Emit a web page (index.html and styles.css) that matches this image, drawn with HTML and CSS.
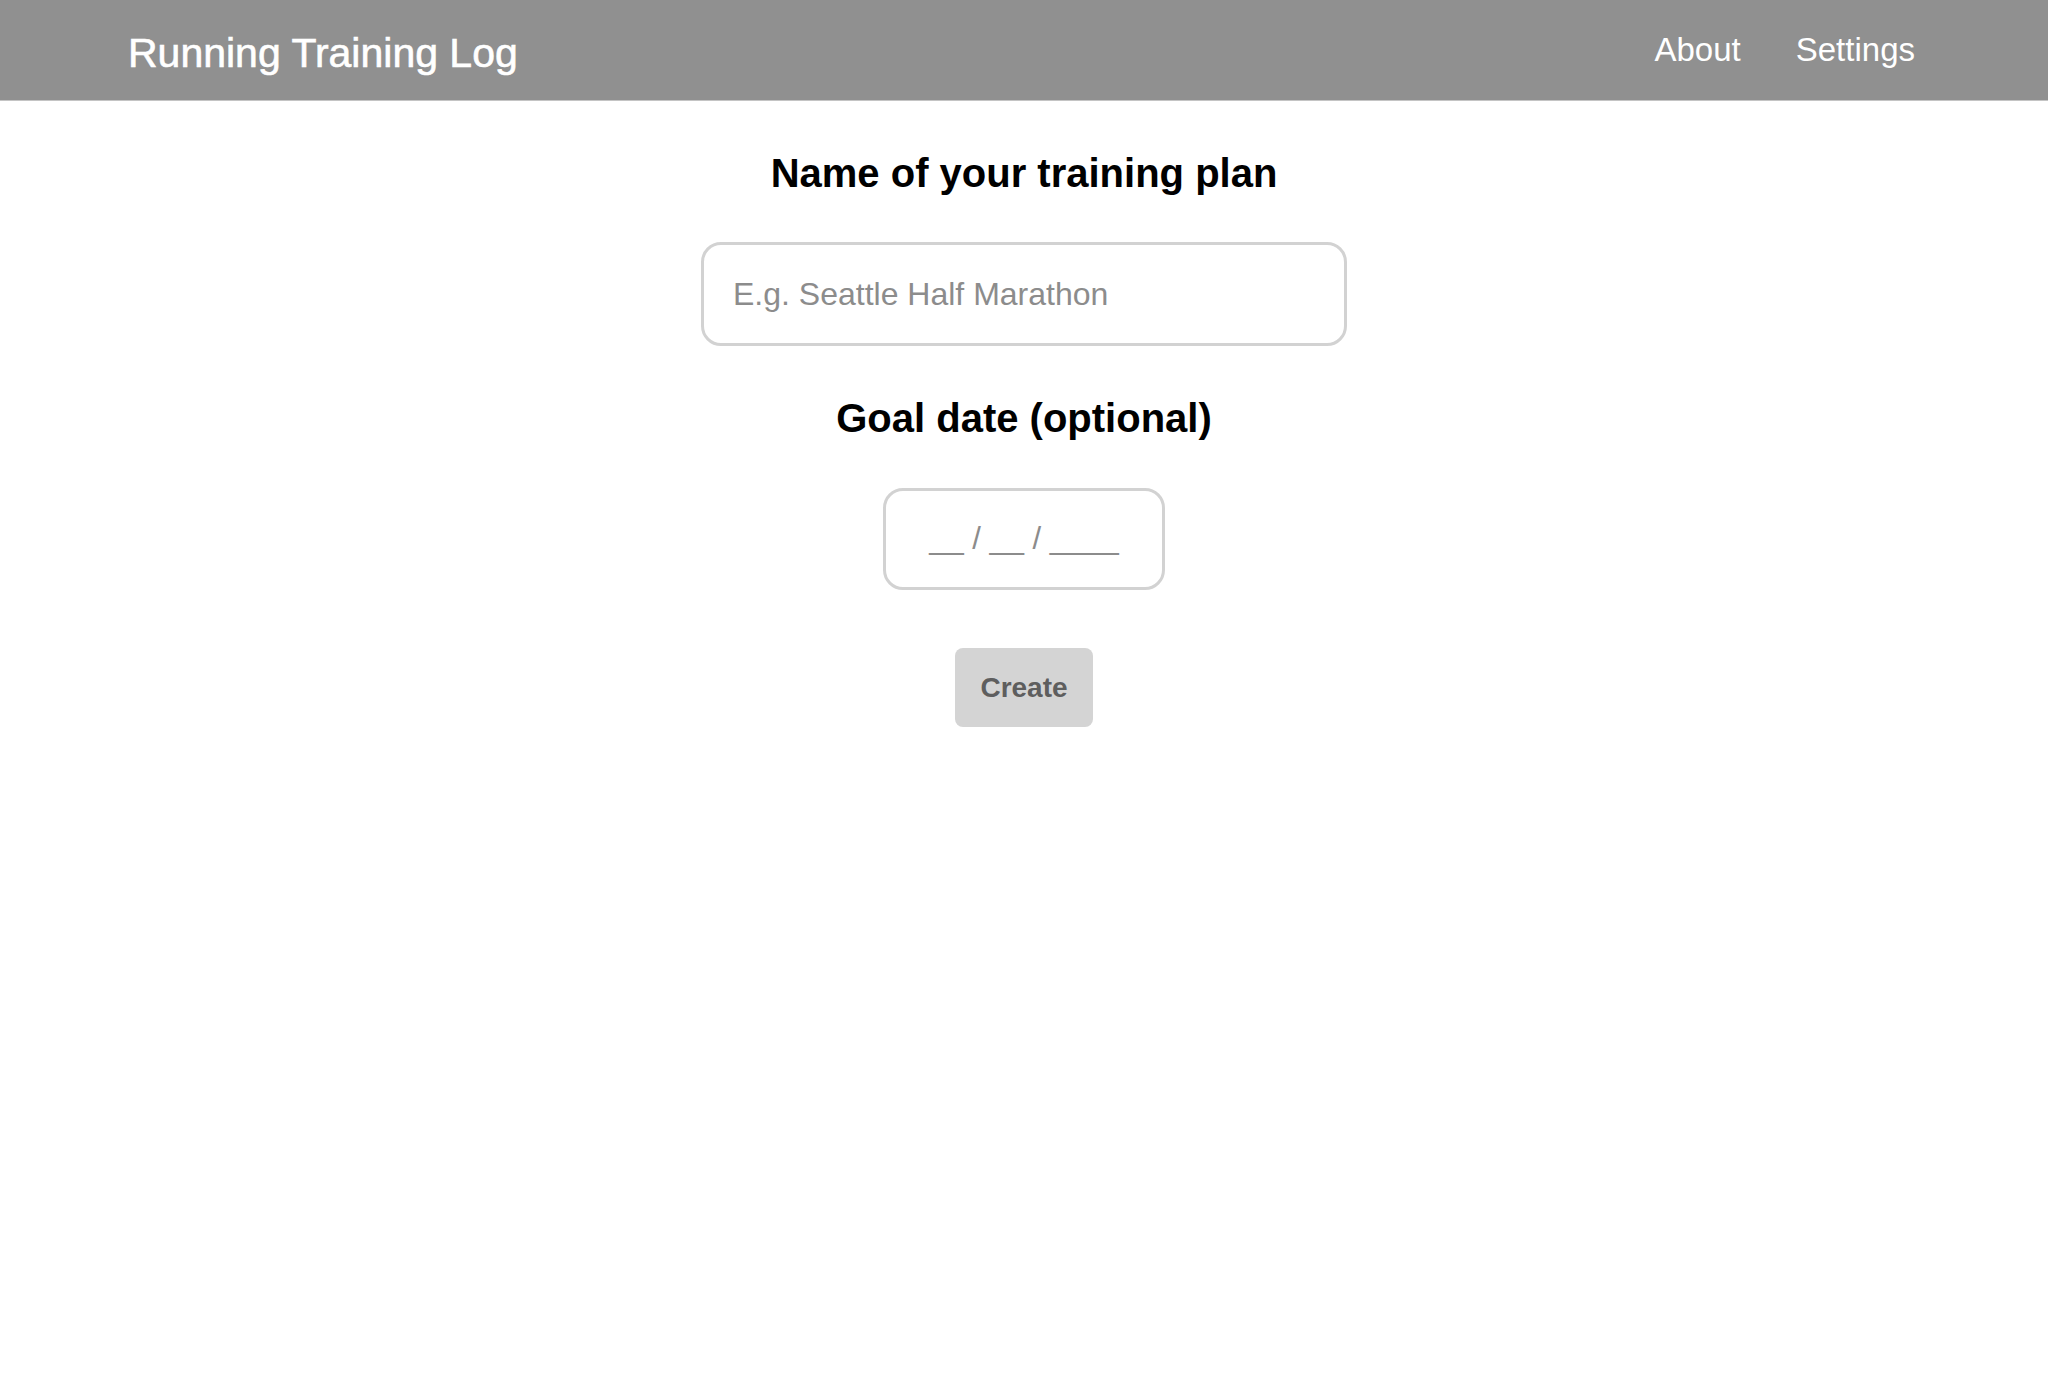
FILE: index.html
```html
<!DOCTYPE html>
<html lang="en">
<head>
<meta charset="utf-8">
<title>Running Training Log</title>
<link rel="stylesheet" href="styles.css">
</head>
<body>
<header class="topbar">
  <div class="brand">Running Training Log</div>
  <nav class="nav">
    <a class="nav-link" href="#">About</a>
    <a class="nav-link" href="#">Settings</a>
  </nav>
</header>
<main class="form">
  <h1 class="label">Name of your training plan</h1>
  <input class="field field-name" type="text" placeholder="E.g. Seattle Half Marathon">
  <h2 class="label label-date">Goal date (optional)</h2>
  <input class="field field-date" type="text" placeholder="__ / __ / ____">
  <button class="create" type="button">Create</button>
</main>
</body>
</html>
```
FILE: styles.css
```css
html, body {
  margin: 0;
  padding: 0;
  background: #ffffff;
  font-family: "Liberation Sans", Arial, Helvetica, sans-serif;
}

.topbar {
  box-sizing: border-box;
  height: 101px;
  background: #909090;
  border-bottom: 1px solid #c4c4c4;
  display: flex;
  align-items: center;
  justify-content: space-between;
  padding: 0 133px 0 128px;
}

.brand {
  color: #ffffff;
  font-size: 41px;
  line-height: 46px;
  margin-top: 6px;
  -webkit-text-stroke: 0.6px #ffffff;
}

.nav {
  display: flex;
  gap: 55px;
}

.nav-link {
  color: #ffffff;
  text-decoration: none;
  font-size: 33px;
  line-height: 38px;
}

.form {
  display: flex;
  flex-direction: column;
  align-items: center;
  padding-top: 49px;
}

.label {
  margin: 0;
  font-size: 40px;
  line-height: 46px;
  font-weight: bold;
  color: #000000;
}

.field {
  box-sizing: border-box;
  height: 104px;
  border: 3px solid #d2d2d2;
  border-radius: 20px;
  font-family: "Liberation Sans", Arial, Helvetica, sans-serif;
  font-size: 32px;
  color: #333333;
  background: #ffffff;
  outline: none;
}

.field::placeholder {
  color: #8c8c8c;
}

.field-name {
  width: 646px;
  margin-top: 46px;
  padding: 0 29px;
}

.label-date {
  margin-top: 49px;
}

.field-date {
  width: 282px;
  height: 102px;
  margin-top: 47px;
  text-align: center;
  padding: 0 20px;
  font-size: 31px;
}

.create {
  margin-top: 58px;
  width: 138px;
  height: 79px;
  border: none;
  border-radius: 8px;
  background: #d4d4d4;
  color: #5e5e5e;
  font-family: "Liberation Sans", Arial, Helvetica, sans-serif;
  font-weight: bold;
  font-size: 28px;
  padding: 0;
}
```
